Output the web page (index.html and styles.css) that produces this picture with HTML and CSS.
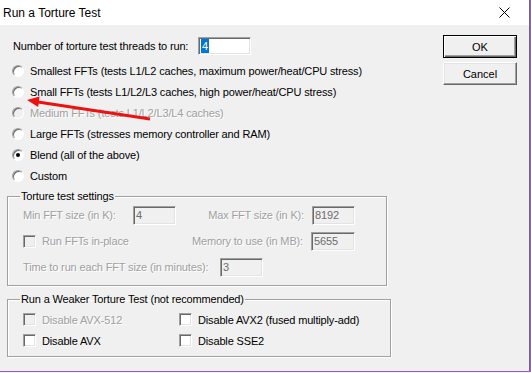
FILE: index.html
```html
<!DOCTYPE html>
<html lang="en">
<head>
  <meta charset="UTF-8">
  <title>Run a Torture Test</title>
  <link rel="stylesheet" href="styles.css">
</head>
<body>
<div class="window">
  <div class="titlebar">
    <span class="title">Run a Torture Test</span>
    <svg class="close" width="11" height="11" viewBox="0 0 11 11">
      <path d="M0.5 0.5 L10.5 10.5 M10.5 0.5 L0.5 10.5" stroke="#000" stroke-width="1"/>
    </svg>
  </div>

  <div class="body">
    <div class="main">
      <div class="threads">
        <span class="threads-label">Number of torture test threads to run:</span>
        <span class="edit threads-edit"><span class="sel">4</span></span>
      </div>

      <div class="options">
        <div class="opt"><span class="radio"></span>Smallest FFTs (tests L1/L2 caches, maximum power/heat/CPU stress)</div>
        <div class="opt"><span class="radio"></span>Small FFTs (tests L1/L2/L3 caches, high power/heat/CPU stress)</div>
        <div class="opt disabled"><span class="radio"></span>Medium FFTs (tests L1/L2/L3/L4 caches)</div>
        <div class="opt"><span class="radio"></span>Large FFTs (stresses memory controller and RAM)</div>
        <div class="opt"><span class="radio checked"></span>Blend (all of the above)</div>
        <div class="opt"><span class="radio"></span>Custom</div>
      </div>

      <fieldset class="group settings">
        <legend>Torture test settings</legend>
        <div class="row">
          <span class="disabled min-label">Min FFT size (in K):</span>
          <span class="edit off">4</span>
          <span class="disabled right-label">Max FFT size (in K):</span>
          <span class="edit off">8192</span>
        </div>
        <div class="row">
          <span class="check-item disabled grow"><span class="check off"></span>Run FFTs in-place</span>
          <span class="disabled right-label">Memory to use (in MB):</span>
          <span class="edit off wide">5655</span>
        </div>
        <div class="row">
          <span class="disabled time-label">Time to run each FFT size (in minutes):</span>
          <span class="edit off">3</span>
        </div>
      </fieldset>

      <fieldset class="group weaker">
        <legend>Run a Weaker Torture Test (not recommended)</legend>
        <div class="checks">
          <span class="check-item disabled"><span class="check off"></span>Disable AVX-512</span>
          <span class="check-item"><span class="check"></span>Disable AVX2 (fused multiply-add)</span>
          <span class="check-item"><span class="check"></span>Disable AVX</span>
          <span class="check-item"><span class="check"></span>Disable SSE2</span>
        </div>
      </fieldset>
    </div>

    <div class="side">
      <button class="btn default">OK</button>
      <button class="btn">Cancel</button>
    </div>
  </div>

  <svg class="arrow" width="531" height="373" viewBox="0 0 531 373">
    <line x1="38" y1="102" x2="150" y2="119" stroke="#ee1111" stroke-width="3"/>
    <polygon points="27,100 39.6,96.6 38.2,107" fill="#ee1111"/>
  </svg>
</div>
</body>
</html>
```

FILE: styles.css
```css
body {
  margin: 0;
  background: #f0f0f0;
  font-family: 'Liberation Sans', Arial, sans-serif;
  font-size: 11px;
  letter-spacing: -0.15px;
  white-space: nowrap;
  color: #000;
}
.window {
  position: relative;
  width: 531px;
  height: 372px;
  box-sizing: border-box;
  background: #f0f0f0;
  border-right: 1px solid #9a5bc7;
  border-bottom: 1px solid #9a5bc7;
  box-shadow: inset -1px 0 0 #6a6a6a;
  overflow: hidden;
}
.titlebar {
  height: 25px;
  margin-right: 1px;
  background: #fff;
  display: flex;
  align-items: center;
  justify-content: space-between;
  padding: 0 19px 0 3px;
}
.title {
  font-size: 12px;
  letter-spacing: 0;
}
.close {
  display: block;
}
.body {
  display: flex;
  padding: 11px 0 0 7px;
}
.main {
  width: 380px;
}
.side {
  display: flex;
  flex-direction: column;
  gap: 4px;
  margin-left: 56px;
  margin-top: -1px;
}

/* edit boxes */
.edit {
  display: inline-flex;
  align-items: center;
  box-sizing: border-box;
  width: 43px;
  height: 19px;
  padding-left: 2px;
  background: #fff;
  border: 1px solid;
  border-color: #a0a0a0 #fff #fff #a0a0a0;
  box-shadow: inset 1px 1px 0 #696969, inset -1px -1px 0 #e3e3e3;
}
.edit.off {
  background: #f0f0f0;
  color: #6d6d6d;
}
.edit.wide {
  width: 44px;
}
.sel {
  background: #0078d7;
  color: #fff;
  padding: 0 1px;
  line-height: 14px;
}

.threads {
  display: flex;
  align-items: center;
  height: 20px;
  padding-left: 6px;
}
.threads-label {
  width: 185px;
}
.threads-edit {
  width: 53px;
  height: 18px;
}

.options {
  margin-top: 4px;
}
.opt {
  display: flex;
  align-items: center;
  height: 21px;
  padding-left: 5px;
}
.radio {
  position: relative;
  width: 12px;
  height: 12px;
  box-sizing: border-box;
  margin-right: 6px;
  border-radius: 50%;
  border: 1px solid;
  border-color: #a0a0a0 #fff #fff #a0a0a0;
  box-shadow: inset 1px 1px 0 #696969;
  background: #fff;
}
.disabled .radio {
  background: #f0f0f0;
}
.radio.checked::after {
  content: '';
  position: absolute;
  left: 3px;
  top: 3px;
  width: 4px;
  height: 4px;
  border-radius: 50%;
  background: #000;
}
.disabled {
  color: #a0a0a0;
  text-shadow: 1px 1px 0 #fff;
}

/* group boxes */
.group {
  margin: 0;
  border: 1px solid #a0a0a0;
  box-shadow: inset 1px 1px 0 #fff, 1px 1px 0 #fff;
  padding: 0 31px 0 15px;
}
.group legend {
  margin-left: -3px;
  padding: 0 1px;
  line-height: 13px;
}
.settings {
  margin-top: 4px;
  padding-top: 2px;
  padding-bottom: 8px;
}
.row {
  display: flex;
  align-items: center;
  height: 20px;
  margin-bottom: 6px;
}
.row:last-child {
  margin-bottom: 0;
}
.min-label {
  width: 110px;
}
.right-label {
  flex: 1;
  text-align: right;
  margin-right: 8px;
}
.grow {
  flex: 1;
}
.time-label {
  width: 197px;
}
.check-item {
  display: flex;
  align-items: center;
  height: 21px;
}
.check {
  width: 13px;
  height: 13px;
  box-sizing: border-box;
  margin-right: 6px;
  border: 1px solid;
  border-color: #a0a0a0 #fff #fff #a0a0a0;
  box-shadow: inset 1px 1px 0 #696969, inset -1px -1px 0 #e3e3e3;
  background: #fff;
}
.check.off {
  background: #f0f0f0;
}
.weaker {
  margin-top: 7px;
  padding-top: 3px;
  padding-bottom: 5px;
}
.checks {
  display: grid;
  grid-template-columns: 156px auto;
}

/* buttons */
.btn {
  width: 74px;
  height: 23px;
  padding: 0;
  font-family: 'Liberation Sans', Arial, sans-serif;
  font-size: 11px;
  color: #000;
  background: #f0f0f0;
  border: 1px solid;
  border-color: #fff #696969 #696969 #fff;
  box-shadow: inset -1px -1px 0 #a0a0a0, inset 1px 1px 0 #e3e3e3;
}
.btn.default {
  border: 1px solid #000;
  box-shadow: inset 1px 1px 0 #fff, inset -1px -1px 0 #696969, inset -2px -2px 0 #a0a0a0;
}

.arrow {
  position: absolute;
  left: 0;
  top: 0;
  pointer-events: none;
}
```
